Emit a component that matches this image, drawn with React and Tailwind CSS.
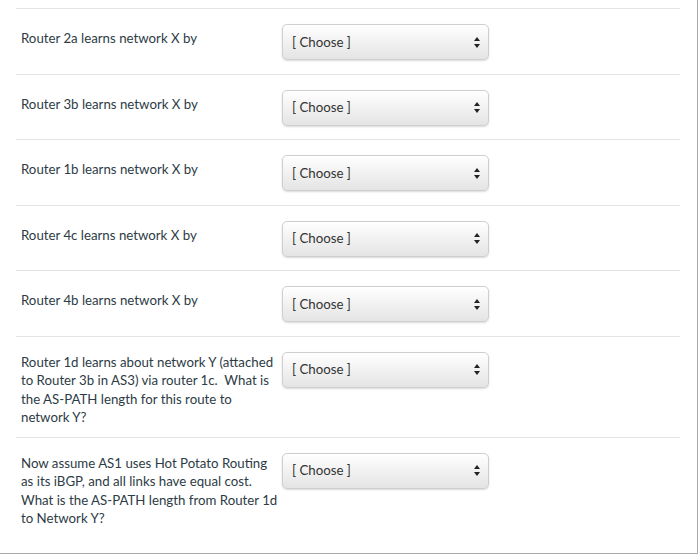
const questions = [
  { lines: ['Router 2a learns network X by'] },
  { lines: ['Router 3b learns network X by'] },
  { lines: ['Router 1b learns network X by'] },
  { lines: ['Router 4c learns network X by'] },
  { lines: ['Router 4b learns network X by'] },
  {
    lines: [
      'Router 1d learns about network Y (attached',
      'to Router 3b in AS3) via router 1c.  What is',
      'the AS-PATH length for this route to',
      'network Y?',
    ],
  },
  {
    lines: [
      'Now assume AS1 uses Hot Potato Routing',
      'as its iBGP, and all links have equal cost.',
      'What is the AS-PATH length from Router 1d',
      'to Network Y?',
    ],
  },
];

function ChooseBox() {
  return (
    <div className="flex h-[36px] w-[207px] shrink-0 items-center justify-between rounded-[5px] border border-[#cfcfcf] bg-gradient-to-b from-white to-[#e4e4e4] pl-[9px] pr-[8px] text-[13.25px] text-[#333] shadow-[0_1px_2px_rgba(0,0,0,0.15)]">
      <span className="whitespace-pre">[ Choose ]</span>
      <svg width="6" height="11" viewBox="0 0 6 11">
        <path d="M3 0 L6 4 L0 4 Z" fill="#222" />
        <path d="M0 7 L6 7 L3 11 Z" fill="#222" />
      </svg>
    </div>
  );
}

export default function App() {
  return (
    <div className="h-[554px] w-[698px] border-r border-b border-[#a9a9a9] bg-white pt-[8px] pl-[16px] pr-[17px] font-['Lato','Liberation_Sans',sans-serif] text-[13.25px] leading-[18.5px] text-[#2d3b45]">
      {questions.map((q, i) => {
        const multi = q.lines.length > 1;
        return (
          <div
            key={i}
            className={
              'flex border-t border-[#e3e3e3] pt-[15px] ' +
              (multi ? 'pb-[10px]' : 'pb-[13.5px]')
            }
          >
            <div className={'w-[266px] shrink-0 pl-[5px] whitespace-pre ' + (multi ? 'pt-[1px]' : 'pt-[5px]')}>
              {q.lines.map((l, j) => (
                <div key={j}>{l}</div>
              ))}
            </div>
            <ChooseBox />
          </div>
        );
      })}
    </div>
  );
}
